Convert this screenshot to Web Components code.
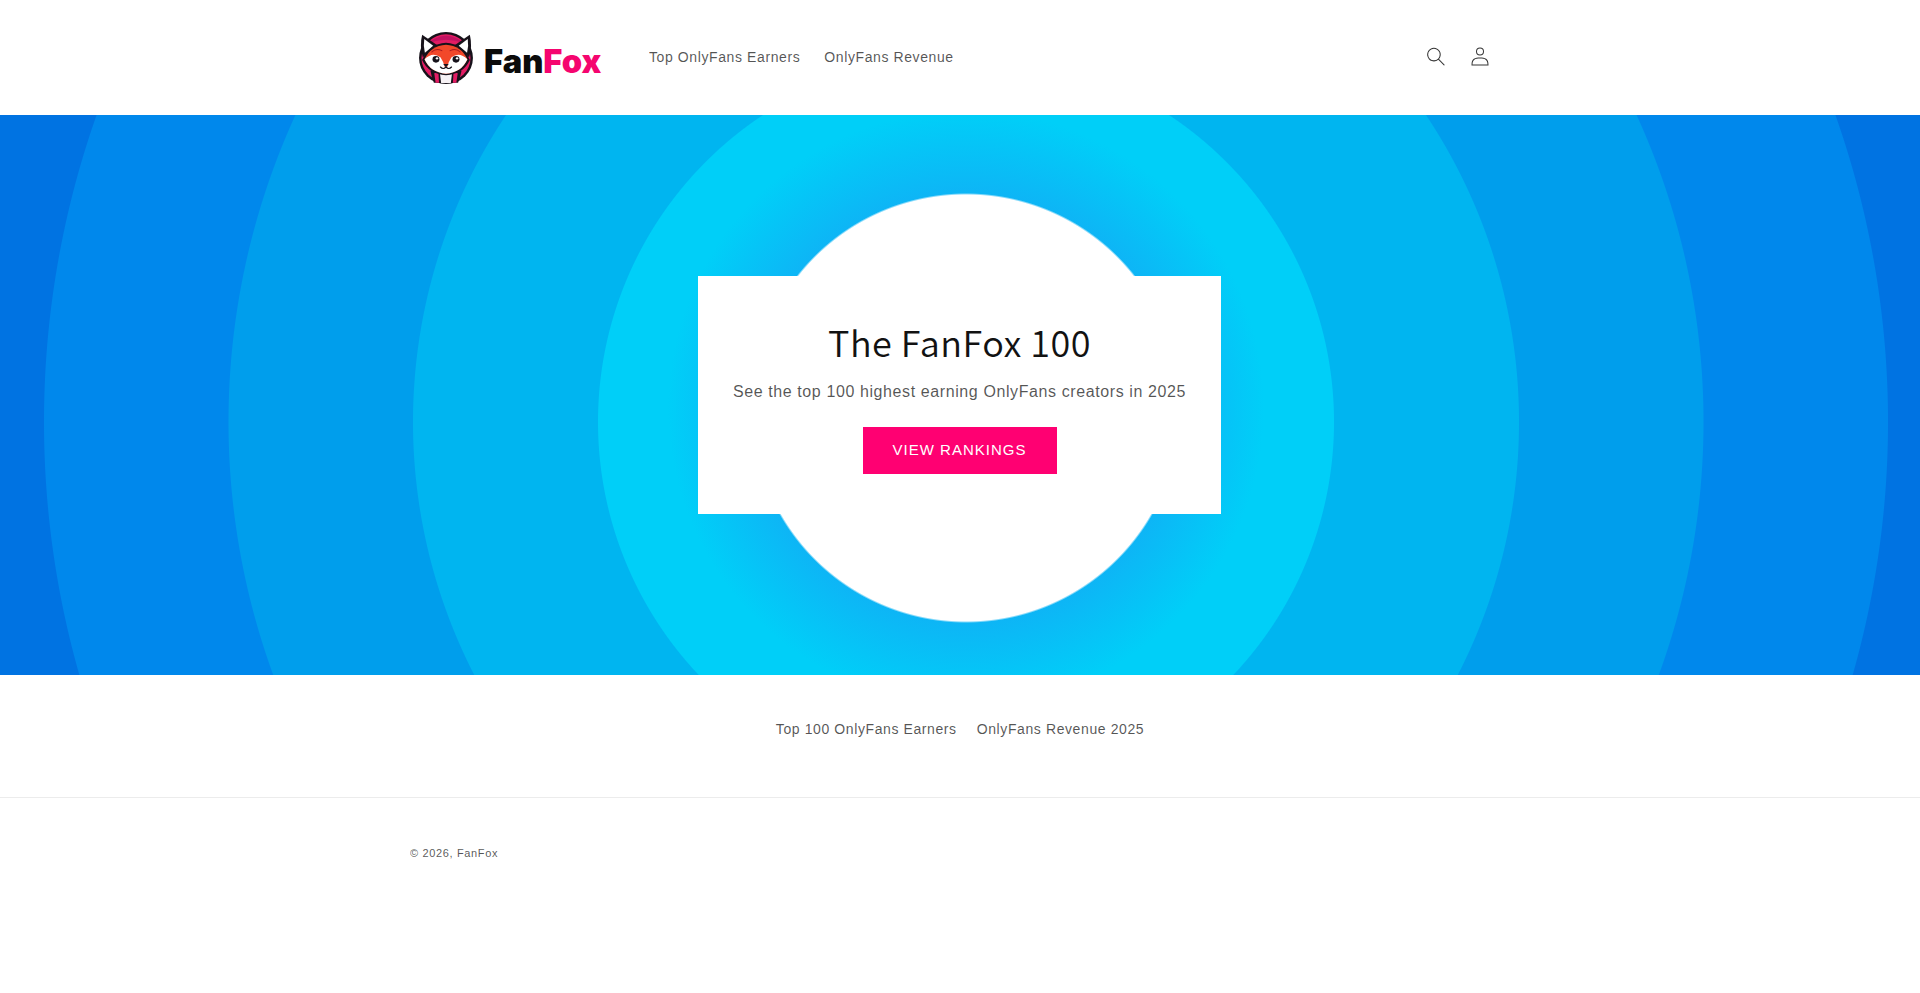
<!DOCTYPE html>
<html lang="en">
<head>
<meta charset="utf-8">
<title>FanFox</title>
<style>
html,body{margin:0;padding:0;background:#fff}
body{font-family:"Liberation Sans",Arial,sans-serif;color:rgba(18,18,18,.75);display:flex;flex-direction:column;min-height:993px}
</style>
</head>
<body>
<ff-header>
  <ff-logo slot="logo"></ff-logo>
  <ff-link slot="nav">Top OnlyFans Earners</ff-link>
  <ff-link slot="nav">OnlyFans Revenue</ff-link>
  <ff-icon slot="icons" name="search"></ff-icon>
  <ff-icon slot="icons" name="account"></ff-icon>
</ff-header>
<ff-hero>
  <ff-card>
    <span slot="title">The FanFox 100</span>
    <span slot="text">See the top 100 highest earning OnlyFans creators in 2025</span>
    <span slot="action">VIEW RANKINGS</span>
  </ff-card>
</ff-hero>
<ff-footer>
  <ff-link slot="links">Top 100 OnlyFans Earners</ff-link>
  <ff-link slot="links">OnlyFans Revenue 2025</ff-link>
  <span slot="copy">© 2026, FanFox</span>
</ff-footer>

<script>
function def(name, html){
  customElements.define(name, class extends HTMLElement{
    constructor(){super();this.attachShadow({mode:'open'}).innerHTML=html;}
  });
}
def('ff-link',`<style>:host{display:inline-block;font-size:14px;line-height:20px;letter-spacing:.6px;color:rgba(18,18,18,.72);white-space:nowrap;opacity:.999}</style><slot></slot>`);

def('ff-logo',`<style>
:host{display:flex;align-items:center;width:197px;height:52px;padding-top:2px}
svg{display:block;flex:none;width:57px;height:52px}
.w{margin-left:9px;margin-top:7px;font:900 32.6px/1 Inter,"Liberation Sans",sans-serif;letter-spacing:0;color:#0b0b0b;white-space:nowrap;opacity:.999}
.w b{font-weight:900;color:#f5056f}
</style>
<svg viewBox="60 52 165 156" preserveAspectRatio="none" aria-hidden="true">
  <circle cx="141" cy="130" r="78" fill="#17121a"/>
  <circle cx="141" cy="130" r="71" fill="#e21c63"/>
  <path d="M88 86Q141 40 194 86Q141 64 88 86Z" fill="#c21262"/>
  <path d="M72 60L116 92L74 128Q64 92 72 60Z" fill="#17121a"/>
  <path d="M210 60L166 92L208 128Q218 92 210 60Z" fill="#17121a"/>
  <path d="M78 73L104 93L80 114Q75 92 78 73Z" fill="#fff"/>
  <path d="M204 73L178 93L202 114Q207 92 204 73Z" fill="#fff"/>
  <path d="M141 176L96 168Q100 190 106 204L176 204Q182 190 186 168Z" fill="#17121a"/>
  <path d="M123 172H159L155 205H127Z" fill="#f7f2f5"/>
  <path d="M107 176L119 172L121 204H111Z" fill="#e21c63"/>
  <path d="M175 176L163 172L161 204H171Z" fill="#e21c63"/>
  <path d="M72 136Q92 88 141 84Q190 88 210 136Q192 178 141 182Q90 178 72 136Z" fill="#17121a"/>
  <path d="M79 134Q96 93 141 90Q186 93 203 134Q186 174 141 177Q96 174 79 134Z" fill="#f2482a"/>
  <path d="M79 134Q102 110 125 128Q133 140 137 156H145Q149 140 157 128Q180 110 203 134Q186 174 141 177Q96 174 79 134Z" fill="#fff"/>
  <path d="M100 112Q112 100 129 108M182 112Q170 100 153 108" fill="none" stroke="#a8191f" stroke-width="3" stroke-linecap="round"/>
  <circle cx="112" cy="134" r="10" fill="#17121a"/><circle cx="170" cy="134" r="10" fill="#17121a"/>
  <circle cx="115" cy="131" r="3.5" fill="#fff"/><circle cx="173" cy="131" r="3.5" fill="#fff"/>
  <path d="M133 148H149L141 157Z" fill="#17121a"/>
  <path d="M125 157Q133 166 141 157Q149 166 157 157" fill="none" stroke="#17121a" stroke-width="3.5" stroke-linecap="round"/>
</svg>
<span class="w">Fan<b>Fox</b></span>`);

customElements.define('ff-icon', class extends HTMLElement{
  constructor(){
    super();
    const paths={
      search:'M11.03 11.68A5.784 5.784 0 112.85 3.5a5.784 5.784 0 018.18 8.18zm.26 1.12a6.78 6.78 0 11.72-.7l5.4 5.4a.5.5 0 11-.71.7l-5.41-5.4z',
      account:'M6 4.5a3 3 0 116 0 3 3 0 01-6 0zm3-4a4 4 0 100 8 4 4 0 000-8zm5.58 12.15c1.12.82 1.83 2.24 1.91 4.85H1.51c.08-2.6.79-4.03 1.9-4.85C4.66 11.75 6.5 11.5 9 11.5s4.35.26 5.58 1.15zM9 10.5c-2.5 0-4.65.24-6.17 1.35C1.27 12.98.5 14.93.5 18v.5h17V18c0-3.07-.77-5.02-2.33-6.15-1.52-1.1-3.67-1.35-6.17-1.35z'
    };
    this.attachShadow({mode:'open'}).innerHTML=`<style>:host{display:flex;align-items:center;justify-content:center;width:44px;height:44px;color:rgba(18,18,18,.85)}svg{display:block;width:18px;height:19px}</style>
    <svg viewBox="0 0 18 19" fill="currentColor"><path fill-rule="evenodd" clip-rule="evenodd" d="${paths[this.getAttribute('name')]||''}"/></svg>`;
  }
});

def('ff-header',`<style>
:host{display:block;height:115px;background:#fff;box-sizing:border-box}
.in{box-sizing:border-box;width:1200px;height:113px;margin:0 auto;padding:0 50px;display:flex;align-items:center}
.logo{display:flex;margin-left:8px}
nav{display:flex;gap:24px;margin-left:34px}
.icons{display:flex;margin-left:auto;margin-right:8px}
</style>
<div class="in">
  <div class="logo"><slot name="logo"></slot></div>
  <nav><slot name="nav"></slot></nav>
  <div class="icons"><slot name="icons"></slot></div>
</div>`);

def('ff-hero',`<style>
:host{display:flex;align-items:center;justify-content:center;height:560px;background-color:#0073e2;
background-image:
 radial-gradient(circle 216px at 966px 293px,#fff 0,#fff 213px,rgba(255,255,255,0) 215px),
 radial-gradient(circle 300px at 966px 293px,rgba(16,176,245,.85) 0,rgba(16,176,245,.85) 213px,rgba(16,180,245,0) 298px),
 radial-gradient(circle 923px at 966px 307px,#00cff8 0,#00cff8 367.5px,#00b5f0 368.5px,#00b5f0 552.5px,#009eec 553.5px,#009eec 737px,#0088ec 738px,#0088ec 921.5px,#0073e2 922.5px);
background-repeat:no-repeat}
</style><slot></slot>`);

def('ff-card',`<style>
:host{display:flex;flex-direction:column;align-items:center;box-sizing:border-box;width:523px;height:238px;margin-right:1px;padding:39px 34px 0;background:#fff;text-align:center}
.t{font:350 36px/52px "Noto Sans CJK SC","Noto Sans",sans-serif;color:#121212;letter-spacing:.5px;white-space:nowrap;height:52px;opacity:.999}
.p{font:400 16px/24px "Liberation Sans",Arial,sans-serif;letter-spacing:.6px;color:rgba(18,18,18,.72);margin-top:13px;white-space:nowrap;opacity:.999}
.b{display:flex;align-items:center;justify-content:center;box-sizing:border-box;width:194px;height:47px;margin-top:23px;padding-bottom:2px;background:#ff0072;color:#fff;font:400 15px/20px "Liberation Sans",Arial,sans-serif;letter-spacing:1px;white-space:nowrap}
.b span{opacity:.999}
</style>
<div class="t"><slot name="title"></slot></div>
<div class="p"><slot name="text"></slot></div>
<div class="b"><span><slot name="action"></slot></span></div>`);

def('ff-footer',`<style>
:host{display:block;background:#fff}
.links{display:flex;justify-content:center;gap:20px;height:123px;padding-top:44px;box-sizing:border-box;border-bottom:1px solid rgba(18,18,18,.08)}
.bottom{box-sizing:border-box;width:1200px;margin:0 auto;padding:47px 50px 0;font-size:11px;line-height:16px;letter-spacing:.65px;color:rgba(18,18,18,.72);opacity:.999}
</style>
<div class="links"><slot name="links"></slot></div>
<div class="bottom"><slot name="copy"></slot></div>`);
</script>
</body>
</html>
